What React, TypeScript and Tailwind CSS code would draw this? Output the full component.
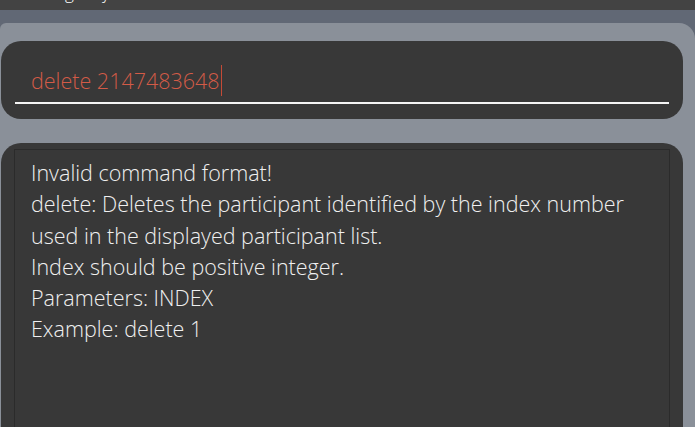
export default function App() {
  const lines = [
    'Invalid command format!',
    'delete: Deletes the participant identified by the index number',
    'used in the displayed participant list.',
    'Index should be positive integer.',
    'Parameters: INDEX',
    'Example: delete 1',
  ];

  return (
    <div
      className="flex h-[427px] w-[695px] flex-col overflow-hidden bg-[#616875]"
      style={{ fontFamily: '"Open Sans", sans-serif' }}
    >
      {/* menu bar, only descenders visible */}
      <div className="h-[10px] shrink-0 overflow-hidden bg-[#434343]">
        <div className="-mt-[17px] pl-[47px] text-[17px] font-light leading-[20px] text-white">
          Tag only
        </div>
      </div>
      <div className="h-[13px] shrink-0" />

      <div className="flex flex-1 flex-col gap-[24px] rounded-tl-[6px] rounded-tr-[16px] bg-[#8a9099] pl-[1px] pr-[12px] pt-[18px]">
        {/* command box */}
        <div className="h-[78px] shrink-0 rounded-[20px] bg-[#383838] px-[14px] pt-[21px]">
          <div className="flex h-[42px] items-center border-b-2 border-[#f4f4f4] pl-[16px] pb-[3px]">
            <span className="text-[21.5px] font-light leading-[30px] text-[#d35b47]">delete 2147483648</span>
            <span className="ml-[1px] h-[31px] w-[1.5px] bg-[#c44a36]" />
          </div>
        </div>

        {/* result box */}
        <div className="flex flex-1 flex-col rounded-t-[20px] bg-[#383838] px-[13px] pt-[6px]">
          <div className="flex-1 border border-b-0 border-[#2b2b2b] pl-[16px] pt-[7px]">
            {lines.map((l) => (
              <div key={l} className="text-[21.5px] font-light leading-[31.3px] text-[#f0f0f0]">
                {l}
              </div>
            ))}
          </div>
        </div>
      </div>
    </div>
  );
}
